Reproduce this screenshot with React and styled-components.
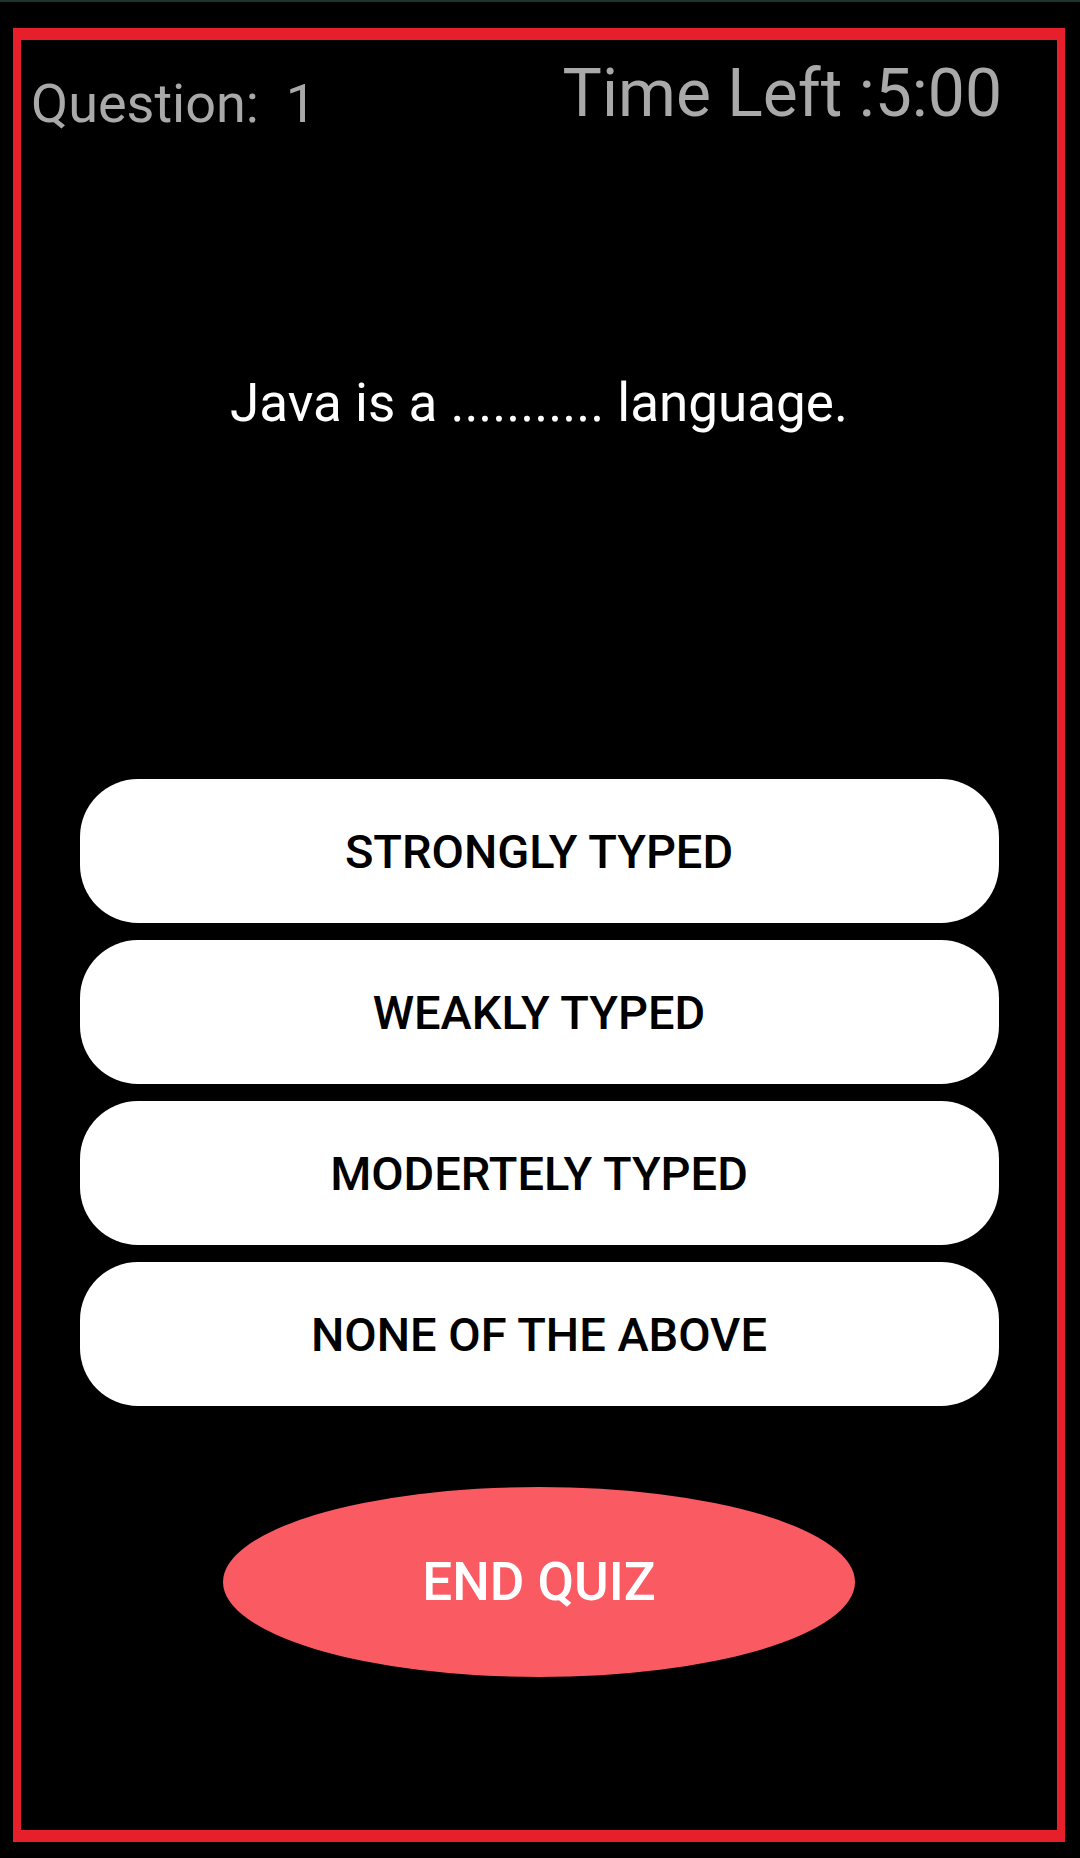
import React from "react";
import styled, { createGlobalStyle } from "styled-components";

const GlobalStyle = createGlobalStyle`
  html, body {
    margin: 0;
    padding: 0;
    background: #000;
  }
  body {
    font-family: Roboto, "Noto Sans", "Liberation Sans", sans-serif;
  }
  * { box-sizing: border-box; }
`;

const StatusLine = styled.div`
  height: 2px;
  background: #1d3631;
`;

const Frame = styled.div`
  margin: 26px 15px 0 13px;
  height: 1814px;
  border-style: solid;
  border-color: #e61f2a;
  border-width: 12px 8px;
  display: flex;
  flex-direction: column;
  align-items: center;
`;

const Header = styled.div`
  align-self: stretch;
  display: flex;
  justify-content: space-between;
  align-items: flex-start;
  padding: 0 55px 0 10px;
`;

const HeaderText = styled.span`
  color: #a9a9a9;
  font-size: ${(p) => p.size}px;
  line-height: 1;
  margin-top: ${(p) => p.top}px;
  white-space: pre;
`;

const QuestionText = styled.p`
  margin: 246px 0 0;
  color: #fff;
  font-size: 53px;
  line-height: 1;
  text-align: center;
`;

const Options = styled.div`
  margin-top: 349px;
  display: flex;
  flex-direction: column;
  gap: 17px;
`;

const OptionButton = styled.button`
  width: 919px;
  height: 144px;
  border: none;
  border-radius: 58px;
  background: #fff;
  color: #000;
  font-family: inherit;
  font-size: 47px;
  font-weight: 500;
  cursor: pointer;
`;

const EndButton = styled.button`
  margin-top: 81px;
  width: 632px;
  height: 190px;
  border: none;
  border-radius: 50%;
  background: #fa5a62;
  color: #fff;
  font-family: inherit;
  font-size: 53px;
  font-weight: 500;
  cursor: pointer;
`;

const options = [
  "STRONGLY TYPED",
  "WEAKLY TYPED",
  "MODERTELY TYPED",
  "NONE OF THE ABOVE",
];

const App = () => {
  return (
    <>
      <GlobalStyle />
      <StatusLine />
      <Frame>
        <Header>
          <HeaderText size={54} top={37}>{"Question:  1"}</HeaderText>
          <HeaderText size={66} top={21}>Time Left :5:00</HeaderText>
        </Header>
        <QuestionText>Java is a ........... language.</QuestionText>
        <Options>
          {options.map((o) => (
            <OptionButton key={o}>{o}</OptionButton>
          ))}
        </Options>
        <EndButton>END QUIZ</EndButton>
      </Frame>
    </>
  );
};

export default App;
